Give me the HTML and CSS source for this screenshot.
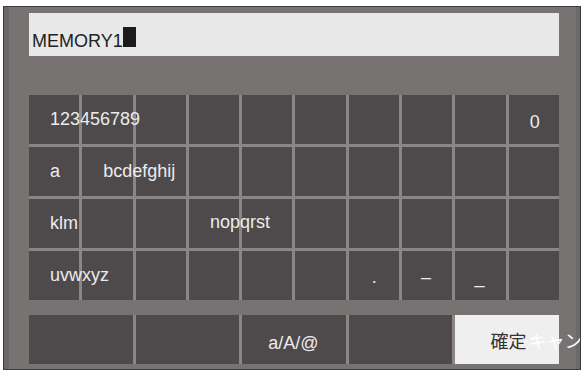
FILE: index.html
```html
<!DOCTYPE html>
<html lang="ja">
<head>
  <meta charset="UTF-8">
  <title>Name Input</title>
  <link rel="stylesheet" href="styles.css">
</head>
<body>
  <div class="frame">
    <div class="entry">MEMORY1<span class="cursor"></span></div>

    <div class="keys">
      <!-- row 1 -->
      <div class="key">123456789</div>
      <div class="key"></div><div class="key"></div><div class="key"></div><div class="key"></div>
      <div class="key"></div><div class="key"></div><div class="key"></div><div class="key"></div>
      <div class="key key-zero">0</div>
      <!-- row 2 -->
      <div class="key">a</div>
      <div class="key">bcdefghij</div>
      <div class="key"></div><div class="key"></div><div class="key"></div><div class="key"></div>
      <div class="key"></div><div class="key"></div><div class="key"></div><div class="key"></div>
      <!-- row 3 -->
      <div class="key">klm</div>
      <div class="key"></div><div class="key"></div>
      <div class="key key-up">nopqrst</div>
      <div class="key"></div><div class="key"></div><div class="key"></div>
      <div class="key"></div><div class="key"></div><div class="key"></div>
      <!-- row 4 -->
      <div class="key">uvwxyz</div>
      <div class="key"></div><div class="key"></div><div class="key"></div><div class="key"></div>
      <div class="key"></div>
      <div class="key key-dot">.</div>
      <div class="key key-sym">–</div>
      <div class="key key-sym">_</div>
      <div class="key"></div>
    </div>

    <div class="actions">
      <div class="btn"></div>
      <div class="btn"></div>
      <div class="btn btn-mode">a/A/@</div>
      <div class="btn"></div>
      <div class="btn btn-ok">確定<span class="next-label">キャンセル</span></div>
    </div>
  </div>
</body>
</html>
```

FILE: styles.css
```css
body {
  margin: 0;
  background: #fff;
  font-family: 'Liberation Sans', Arial, 'Noto Sans CJK JP', sans-serif;
}
.frame {
  box-sizing: border-box;
  width: 578px;
  height: 364px;
  margin: 6px 3px 0 3px;
  padding: 6px 21px 0 25px;
  background: #777373;
  border: 1px solid #3f3b3b;
  box-shadow: inset 5px 0 0 #6a6666, inset -4px 0 0 #6d6969;
  overflow: hidden;
}
.entry {
  box-sizing: border-box;
  height: 43px;
  padding: 14px 0 0 3px;
  background: #e8e8e8;
  color: #222;
  font-size: 18px;
  line-height: 22px;
  white-space: nowrap;
}
.cursor {
  display: inline-block;
  width: 13px;
  height: 20px;
  background: #1b1b1b;
}
.keys {
  margin-top: 39px;
  display: grid;
  grid-template-columns: repeat(10, 1fr);
  grid-auto-rows: 49px;
  gap: 3px;
  background: #8a8686;
}
.key {
  display: flex;
  align-items: center;
  padding-left: 21px;
  background: #4e4a4b;
  color: #ececec;
  font-size: 18px;
  white-space: nowrap;
  min-width: 0;
}
/* labels run over the neighbouring keys */
.key:not(:empty),
.btn:not(:empty) {
  z-index: 1;
}
.key-zero {
  padding-top: 6px;
}
.key-up {
  padding-bottom: 3px;
}
.key-dot {
  padding-left: 23px;
  padding-top: 3px;
}
.key-sym {
  padding-left: 19px;
  padding-top: 3px;
}
.actions {
  margin-top: 15px;
  display: grid;
  grid-template-columns: repeat(5, 1fr);
  height: 49px;
  gap: 3px;
  background: #8a8686;
}
.btn {
  display: flex;
  align-items: center;
  background: #4e4a4b;
  color: #ececec;
  font-size: 18px;
  white-space: nowrap;
  min-width: 0;
}
.btn-mode {
  padding: 8px 0 0 26px;
}
.btn-ok {
  padding-left: 35px;
  background: #efefef;
  color: #333;
  font-family: 'Noto Sans CJK JP', sans-serif;
  font-size: 18px;
}
.next-label {
  margin-left: 2px;
  color: #fff;
}
```
